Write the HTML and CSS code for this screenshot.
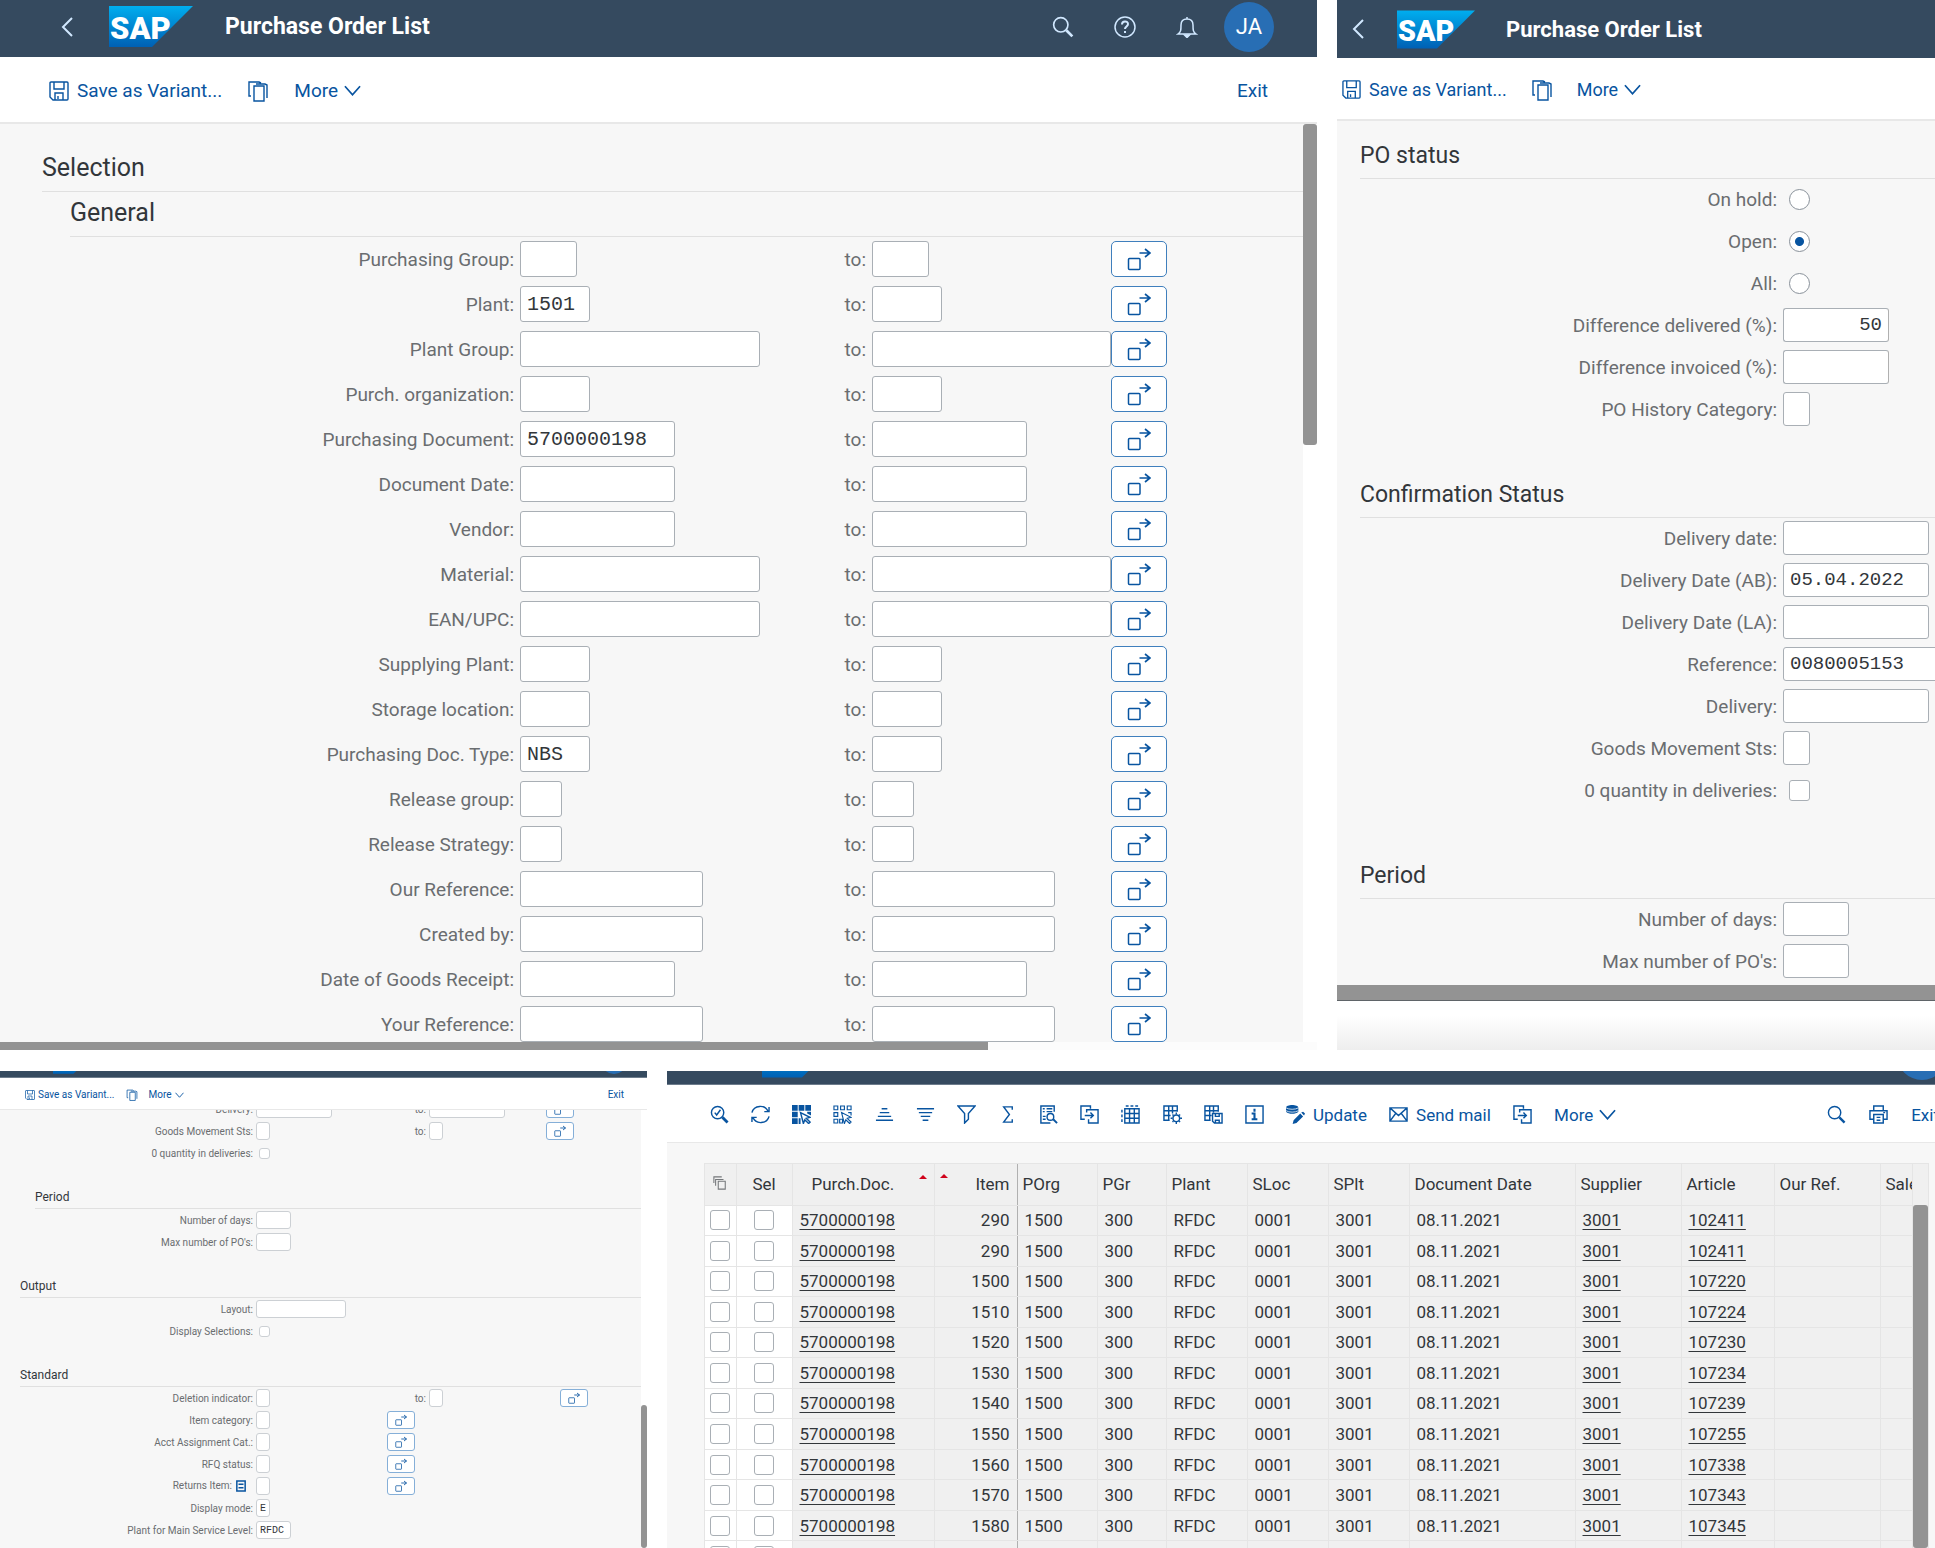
FILE: index.html
```
<!DOCTYPE html>
<html lang="en">
<head>
	<meta charset="utf-8">
	<title>Purchase Order List</title>
	<link rel="stylesheet" href="styles.css">
</head>
<body>

<!-- icon set, used by all four screens -->
<svg class="defs" aria-hidden="true">
	<defs>
		<linearGradient id="sap-blue" x1="0" y1="0" x2="0" y2="1">
			<stop offset="0" stop-color="#00aeef"/>
			<stop offset="1" stop-color="#0060b4"/>
		</linearGradient>
	</defs>
	<symbol id="sap" viewBox="0 0 84 41">
		<path d="M0 0h84L43 41H0z" fill="url(#sap-blue)" stroke="none"/>
		<text x="1" y="33" class="sap-text">SAP</text>
	</symbol>
	<symbol id="back" viewBox="0 0 12 20"><path d="M11 1L2 10l9 9" stroke-width="2"/></symbol>
	<symbol id="search" viewBox="0 0 20 20"><circle cx="8" cy="8" r="6.5"/><path d="M13 13l5.500 5.500" stroke-width="2.500"/></symbol>
	<symbol id="help" viewBox="0 0 22 22"><circle cx="11" cy="11" r="10"/><path d="M8 8.500c0-4 6-4 6-.5 0 2.500-3 2.500-3 5M11 15v2" stroke-width="2"/></symbol>
	<symbol id="bell" viewBox="0 0 20 22"><path d="M1 18c3-2 3-4 3-9 0-4 2-6 6-6s6 2 6 6c0 5 0 7 3 9zM10 1v2"/><path d="M7.500 19h5l-2.500 2.500z" fill="currentColor"/></symbol>
	<symbol id="save" viewBox="0 0 20 20"><path d="M2 1h16q1 0 1 1v16q0 1-1 1H4l-3-3V2q0-1 1-1zM5 1v7h10V1M6 19v-7h8v7M9 15v3" stroke-width="1.400"/></symbol>
	<symbol id="copy" viewBox="0 0 22 22"><path d="M4 16H2V2h10l2 1M7 6h10v15H7zM9 4h9l2 1v13" stroke-width="1.400"/></symbol>
	<symbol id="down" viewBox="0 0 18 11"><path d="M1 1l8 9 8-9" stroke-width="1.800"/></symbol>
	<symbol id="multi" viewBox="0 0 24 24"><rect x="1.500" y="11.500" width="11.500" height="11" rx="1"/><path d="M12.500 6h10.500M18 2l5 4-5 4" stroke-width="1.700"/></symbol>
	<symbol id="list" viewBox="0 0 12 14"><path d="M1 1h10v12H1zM3 5h6M3 9h6" stroke-width="1.800"/></symbol>
	<symbol id="details" viewBox="0 0 20 20"><circle cx="8" cy="8" r="6.500"/><path d="M5 8l2 2.500L11 5"/><path d="M13 13l5.500 5.500" stroke-width="3"/></symbol>
	<symbol id="refresh" viewBox="0 0 20 20"><path d="M1 8c2-8 14-9 17-1M19 2v5h-5M19 12c-2 8-14 9-17 1M1 18v-5h5"/></symbol>
	<symbol id="select-all" viewBox="0 0 20 20"><path d="M0 0h6v6H0zM7 0h6v6H7zM14 0h6v6h-6zM0 7h6v6H0zM0 14h6v6H0zM7 14h2v6H7zM16 7h4v4l-4-2z" fill="currentColor" stroke="none"/><path d="M9 8l10 5-4 1 4 4-1.500 1.500-4-4-1.500 4z"/></symbol>
	<symbol id="deselect-all" viewBox="0 0 20 20"><path d="M1 1h4v4H1zM8 1h4v4H8zM15 1h4v4h-4zM1 8h4v4H1zM1 15h4v4H1zM7 15h3v4H7zM16 8h3v3M9 8l10 5-4 1 4 4-1.500 1.500-4-4-1.500 4z" stroke-width="1.200"/></symbol>
	<symbol id="asc" viewBox="0 0 20 20"><path d="M7 4h6M5 8h10M3 12h14M1 16h18"/></symbol>
	<symbol id="desc" viewBox="0 0 20 20"><path d="M1 4h18M3 8h14M5 12h10M7 16h6"/></symbol>
	<symbol id="filter" viewBox="0 0 20 20"><path d="M1 1h18l-7 8v6l-4 4V9z"/></symbol>
	<symbol id="sum" viewBox="0 0 20 20"><path d="M15 5V2H6l6 8-6 8h9v-3"/></symbol>
	<symbol id="view" viewBox="0 0 20 20"><path d="M16 7V1H2v18h10M4 4h2M8 4h6M4 7h2M8 7h6M4 12h3M4 15h3"/><circle cx="12" cy="12.500" r="3.500"/><path d="M15 15l4 4" stroke-width="2"/></symbol>
	<symbol id="export" viewBox="0 0 20 20"><path d="M5 15H1V1h10v3M7 8V5h12v14H9v-4M5 11h9M11 8l3 3-3 3"/></symbol>
	<symbol id="grid" viewBox="0 0 20 20"><path d="M4 4h15v15H4zM4 9h15M4 14h15M9 4v15M14 4v15M5 1h3M10 1h3M15 1h3M1 5v3M1 10v3M1 15v3"/></symbol>
	<symbol id="grid-gear" viewBox="0 0 20 20"><path d="M7 16H1V1h14v6M1 6h14M1 11h7M6 1v15M10 1v8"/><circle cx="14" cy="14" r="3.500"/><path d="M14 8v2M14 18v2M8 14h2M18 14h2M10 10l1 1M17 17l1 1M10 18l1-1M17 11l1-1"/></symbol>
	<symbol id="grid-save" viewBox="0 0 20 20"><path d="M7 16H1V1h14v6M1 6h14M1 11h7M6 1v15M10 1v7M9 9h10v10H11l-2-2zM12 9v3h4V9M12 19v-3h4v3"/></symbol>
	<symbol id="info" viewBox="0 0 20 20"><path d="M1 1h18v18H1z"/><path d="M10 4v3M7 9h3v6M7 15h6" stroke-width="2.200"/></symbol>
	<symbol id="update" viewBox="0 0 20 20"><path d="M0 3c0-4 13-4 13 0v4c-3 3-10 3-13 0z" fill="currentColor" stroke="none"/><path d="M0 3c3 2 10 2 13 0M0 6c3 2 10 2 13 0" stroke="#fff" stroke-width=".8"/><path d="M7 20l1-4 7-7 3 3-7 7zM16 8l2-1 2 2-1 2z" fill="currentColor" stroke="none"/></symbol>
	<symbol id="mail" viewBox="0 0 20 18"><path d="M1 2h18v14H1zM1 2l9 8 9-8M1 16l6-8M19 16l-6-8"/></symbol>
	<symbol id="print" viewBox="0 0 20 20"><path d="M5 6V1h10v5M5 15H1V6h18v9h-4M5 10h10v9H5zM8 13h4M8 16h4M15 8h2"/></symbol>
	<symbol id="stack" viewBox="0 0 16 16"><path d="M6 6h8v9H6zM3 11V4h9M1 8V1h9" stroke-width="1.200"/></symbol>
</svg>

<main class="board">

<!-- selection screen -->
<section class="screen general">
	<header class="shell">
		<button class="icon-btn" aria-label="Back"><svg class="back"><use href="#back"/></svg></button>
		<svg class="logo" role="img" aria-label="SAP"><use href="#sap"/></svg>
		<h1>Purchase Order List</h1>
		<nav class="shell-actions">
			<button class="icon-btn" aria-label="Search"><svg class="ico"><use href="#search"/></svg></button>
			<button class="icon-btn" aria-label="Help"><svg class="ico"><use href="#help"/></svg></button>
			<button class="icon-btn" aria-label="Notifications"><svg class="ico"><use href="#bell"/></svg></button>
			<button class="avatar">JA</button>
		</nav>
	</header>
	<div class="toolbar">
		<button><svg class="ico"><use href="#save"/></svg>Save as Variant...</button>
		<button aria-label="Copy"><svg class="ico copy"><use href="#copy"/></svg></button>
		<button class="more">More<svg class="down"><use href="#down"/></svg></button>
		<button class="exit">Exit</button>
	</div>
	<div class="scroller">
		<div class="content">
			<h2>Selection</h2>
			<h2 class="sub">General</h2>
			<form class="rows">
				<div class="row"><label for="pg">Purchasing Group:</label><input id="pg" class="w3"><label for="pg2">to:</label><input id="pg2" class="w3"><button type="button" aria-label="Multiple selection"><svg><use href="#multi"/></svg></button></div>
				<div class="row"><label for="pl">Plant:</label><input id="pl" class="w4" value="1501"><label for="pl2">to:</label><input id="pl2" class="w4"><button type="button" aria-label="Multiple selection"><svg><use href="#multi"/></svg></button></div>
				<div class="row"><label for="plg">Plant Group:</label><input id="plg"><label for="plg2">to:</label><input id="plg2"><button type="button" aria-label="Multiple selection"><svg><use href="#multi"/></svg></button></div>
				<div class="row"><label for="po">Purch. organization:</label><input id="po" class="w4"><label for="po2">to:</label><input id="po2" class="w4"><button type="button" aria-label="Multiple selection"><svg><use href="#multi"/></svg></button></div>
				<div class="row"><label for="pd">Purchasing Document:</label><input id="pd" class="w10" value="5700000198"><label for="pd2">to:</label><input id="pd2" class="w10"><button type="button" aria-label="Multiple selection"><svg><use href="#multi"/></svg></button></div>
				<div class="row"><label for="dd">Document Date:</label><input id="dd" class="w10"><label for="dd2">to:</label><input id="dd2" class="w10"><button type="button" aria-label="Multiple selection"><svg><use href="#multi"/></svg></button></div>
				<div class="row"><label for="ve">Vendor:</label><input id="ve" class="w10"><label for="ve2">to:</label><input id="ve2" class="w10"><button type="button" aria-label="Multiple selection"><svg><use href="#multi"/></svg></button></div>
				<div class="row"><label for="ma">Material:</label><input id="ma"><label for="ma2">to:</label><input id="ma2"><button type="button" aria-label="Multiple selection"><svg><use href="#multi"/></svg></button></div>
				<div class="row"><label for="ean">EAN/UPC:</label><input id="ean"><label for="ean2">to:</label><input id="ean2"><button type="button" aria-label="Multiple selection"><svg><use href="#multi"/></svg></button></div>
				<div class="row"><label for="sp">Supplying Plant:</label><input id="sp" class="w4"><label for="sp2">to:</label><input id="sp2" class="w4"><button type="button" aria-label="Multiple selection"><svg><use href="#multi"/></svg></button></div>
				<div class="row"><label for="sl">Storage location:</label><input id="sl" class="w4"><label for="sl2">to:</label><input id="sl2" class="w4"><button type="button" aria-label="Multiple selection"><svg><use href="#multi"/></svg></button></div>
				<div class="row"><label for="dt">Purchasing Doc. Type:</label><input id="dt" class="w4" value="NBS"><label for="dt2">to:</label><input id="dt2" class="w4"><button type="button" aria-label="Multiple selection"><svg><use href="#multi"/></svg></button></div>
				<div class="row"><label for="rg">Release group:</label><input id="rg" class="w2"><label for="rg2">to:</label><input id="rg2" class="w2"><button type="button" aria-label="Multiple selection"><svg><use href="#multi"/></svg></button></div>
				<div class="row"><label for="rs">Release Strategy:</label><input id="rs" class="w2"><label for="rs2">to:</label><input id="rs2" class="w2"><button type="button" aria-label="Multiple selection"><svg><use href="#multi"/></svg></button></div>
				<div class="row"><label for="or">Our Reference:</label><input id="or" class="w12"><label for="or2">to:</label><input id="or2" class="w12"><button type="button" aria-label="Multiple selection"><svg><use href="#multi"/></svg></button></div>
				<div class="row"><label for="cb">Created by:</label><input id="cb" class="w12"><label for="cb2">to:</label><input id="cb2" class="w12"><button type="button" aria-label="Multiple selection"><svg><use href="#multi"/></svg></button></div>
				<div class="row"><label for="gr">Date of Goods Receipt:</label><input id="gr" class="w10"><label for="gr2">to:</label><input id="gr2" class="w10"><button type="button" aria-label="Multiple selection"><svg><use href="#multi"/></svg></button></div>
				<div class="row"><label for="yr">Your Reference:</label><input id="yr" class="w12"><label for="yr2">to:</label><input id="yr2" class="w12"><button type="button" aria-label="Multiple selection"><svg><use href="#multi"/></svg></button></div>
			</form>
		</div>
		<div class="vbar"><div class="thumb"></div></div>
	</div>
	<div class="hbar"><div class="thumb"></div></div>
</section>

<!-- status screen -->
<section class="screen status">
	<header class="shell">
		<button class="icon-btn" aria-label="Back"><svg class="back"><use href="#back"/></svg></button>
		<svg class="logo" role="img" aria-label="SAP"><use href="#sap"/></svg>
		<h1>Purchase Order List</h1>
	</header>
	<div class="toolbar">
		<button><svg class="ico"><use href="#save"/></svg>Save as Variant...</button>
		<button aria-label="Copy"><svg class="ico copy"><use href="#copy"/></svg></button>
		<button class="more">More<svg class="down"><use href="#down"/></svg></button>
	</div>
	<form class="content">
		<h2>PO status</h2>
		<div class="rows">
			<div class="row"><label for="hold">On hold:</label><input type="radio" name="st" id="hold"></div>
			<div class="row"><label for="open">Open:</label><input type="radio" name="st" id="open" checked></div>
			<div class="row"><label for="all">All:</label><input type="radio" name="st" id="all"></div>
			<div class="row"><label for="dfd">Difference delivered (%):</label><input id="dfd" class="w7 num" value="50"></div>
			<div class="row"><label for="dfi">Difference invoiced (%):</label><input id="dfi" class="w7 num"></div>
			<div class="row"><label for="poh">PO History Category:</label><input id="poh" class="w1"></div>
		</div>
		<h2>Confirmation Status</h2>
		<div class="rows">
			<div class="row"><label for="ded">Delivery date:</label><input id="ded" class="w10"></div>
			<div class="row"><label for="dab">Delivery Date (AB):</label><input id="dab" class="w10" value="05.04.2022"></div>
			<div class="row"><label for="dla">Delivery Date (LA):</label><input id="dla" class="w10"></div>
			<div class="row"><label for="ref">Reference:</label><input id="ref" value="0080005153"></div>
			<div class="row"><label for="del">Delivery:</label><input id="del" class="w10"></div>
			<div class="row"><label for="gms">Goods Movement Sts:</label><input id="gms" class="w1"></div>
			<div class="row"><label for="zq">0 quantity in deliveries:</label><input type="checkbox" id="zq"></div>
		</div>
		<h2>Period</h2>
		<div class="rows">
			<div class="row"><label for="nod">Number of days:</label><input id="nod" class="w4"></div>
			<div class="row"><label for="mpo">Max number of PO's:</label><input id="mpo" class="w4"></div>
		</div>
	</form>
	<div class="hbar"><div class="thumb"></div></div>
	<div class="foot"></div>
</section>

<!-- lower part of the selection screen -->
<section class="screen standard">
	<header class="shell cut">
		<svg class="logo" role="img" aria-label="SAP"><use href="#sap"/></svg>
		<span class="avatar"></span>
	</header>
	<div class="toolbar">
		<button><svg class="ico"><use href="#save"/></svg>Save as Variant...</button>
		<button aria-label="Copy"><svg class="ico copy"><use href="#copy"/></svg></button>
		<button class="more">More<svg class="down"><use href="#down"/></svg></button>
		<button class="exit">Exit</button>
	</div>
	<div class="scroller">
		<form class="content">
			<div class="rows">
				<div class="row"><label for="sdel">Delivery:</label><input id="sdel" class="w10"><label for="sdel2">to:</label><input id="sdel2" class="w10"><button type="button" aria-label="Multiple selection"><svg><use href="#multi"/></svg></button></div>
				<div class="row"><label for="sgm">Goods Movement Sts:</label><input id="sgm" class="w1"><label for="sgm2">to:</label><input id="sgm2" class="w1"><button type="button" aria-label="Multiple selection"><svg><use href="#multi"/></svg></button></div>
				<div class="row"><label for="szq">0 quantity in deliveries:</label><input type="checkbox" id="szq"></div>
			</div>
			<h2 class="sub">Period</h2>
			<div class="rows">
				<div class="row"><label for="snd">Number of days:</label><input id="snd" class="w4"></div>
				<div class="row"><label for="smp">Max number of PO's:</label><input id="smp" class="w4"></div>
			</div>
			<h2>Output</h2>
			<div class="rows">
				<div class="row"><label for="lay">Layout:</label><input id="lay"></div>
				<div class="row"><label for="dsel">Display Selections:</label><input type="checkbox" id="dsel"></div>
			</div>
			<h2>Standard</h2>
			<div class="rows">
				<div class="row wide"><label for="di">Deletion indicator:</label><input id="di" class="w1"><label for="di2">to:</label><input id="di2" class="w1"><button type="button" aria-label="Multiple selection"><svg><use href="#multi"/></svg></button></div>
				<div class="row single"><label for="ic">Item category:</label><input id="ic" class="w1"><button type="button" aria-label="Multiple selection"><svg><use href="#multi"/></svg></button></div>
				<div class="row single"><label for="aac">Acct Assignment Cat.:</label><input id="aac" class="w1"><button type="button" aria-label="Multiple selection"><svg><use href="#multi"/></svg></button></div>
				<div class="row single"><label for="rfq">RFQ status:</label><input id="rfq" class="w1"><button type="button" aria-label="Multiple selection"><svg><use href="#multi"/></svg></button></div>
				<div class="row single"><label for="ri">Returns Item:<svg class="list"><use href="#list"/></svg></label><input id="ri" class="w1"><button type="button" aria-label="Multiple selection"><svg><use href="#multi"/></svg></button></div>
				<div class="row"><label for="dm">Display mode:</label><input id="dm" class="w1" value="E"></div>
				<div class="row"><label for="psl">Plant for Main Service Level:</label><input id="psl" class="w4" value="RFDC"></div>
			</div>
		</form>
		<div class="vbar"><div class="thumb"></div></div>
	</div>
</section>

<!-- result list -->
<section class="screen result">
	<header class="shell cut">
		<svg class="logo" role="img" aria-label="SAP"><use href="#sap"/></svg>
		<span class="avatar"></span>
	</header>
	<div class="toolbar">
		<div class="tools">
			<button aria-label="Details"><svg class="ico"><use href="#details"/></svg></button>
			<button aria-label="Refresh"><svg class="ico"><use href="#refresh"/></svg></button>
			<button aria-label="Select all"><svg class="ico"><use href="#select-all"/></svg></button>
			<button aria-label="Deselect all"><svg class="ico"><use href="#deselect-all"/></svg></button>
			<button aria-label="Sort ascending"><svg class="ico"><use href="#asc"/></svg></button>
			<button aria-label="Sort descending"><svg class="ico"><use href="#desc"/></svg></button>
			<button aria-label="Filter"><svg class="ico"><use href="#filter"/></svg></button>
			<button aria-label="Total"><svg class="ico"><use href="#sum"/></svg></button>
			<button aria-label="Print preview"><svg class="ico"><use href="#view"/></svg></button>
			<button aria-label="Export"><svg class="ico"><use href="#export"/></svg></button>
			<button aria-label="Spreadsheet"><svg class="ico"><use href="#grid"/></svg></button>
			<button aria-label="Change layout"><svg class="ico"><use href="#grid-gear"/></svg></button>
			<button aria-label="Save layout"><svg class="ico"><use href="#grid-save"/></svg></button>
			<button aria-label="Information"><svg class="ico"><use href="#info"/></svg></button>
			<button><svg class="ico"><use href="#update"/></svg>Update</button>
			<button><svg class="ico"><use href="#mail"/></svg>Send mail</button>
			<button aria-label="Export list"><svg class="ico"><use href="#export"/></svg></button>
			<button class="more">More<svg class="down"><use href="#down"/></svg></button>
		</div>
		<div class="tools-right">
			<button aria-label="Search"><svg class="ico"><use href="#search"/></svg></button>
			<button aria-label="Print"><svg class="ico"><use href="#print"/></svg></button>
			<button>Exit</button>
		</div>
	</div>
	<div class="list-area">
		<table>
			<colgroup><col class="c-mark"><col class="c-sel"><col class="c-doc"><col class="c-item"><col class="c-porg"><col class="c-pgr"><col class="c-code"><col class="c-code"><col class="c-code"><col class="c-date"><col class="c-supp"><col class="c-art"><col class="c-supp"><col></colgroup>
			<thead>
				<tr><th class="mark"><svg class="stack"><use href="#stack"/></svg></th><th class="mark">Sel</th><th class="doc sorted">Purch.Doc.</th><th class="num sorted">Item</th><th class="fix">POrg</th><th>PGr</th><th>Plant</th><th>SLoc</th><th>SPlt</th><th>Document Date</th><th>Supplier</th><th>Article</th><th>Our Ref.</th><th>Sales</th></tr>
			</thead>
			<tbody>
				<tr><td class="mark"><input type="checkbox" aria-label="Mark row"></td><td class="mark"><input type="checkbox" aria-label="Sel"></td><td><a href="#">5700000198</a></td><td class="num">290</td><td class="fix">1500</td><td>300</td><td>RFDC</td><td>0001</td><td>3001</td><td>08.11.2021</td><td><a href="#">3001</a></td><td><a href="#">102411</a></td><td></td><td></td></tr>
				<tr><td class="mark"><input type="checkbox" aria-label="Mark row"></td><td class="mark"><input type="checkbox" aria-label="Sel"></td><td><a href="#">5700000198</a></td><td class="num">290</td><td class="fix">1500</td><td>300</td><td>RFDC</td><td>0001</td><td>3001</td><td>08.11.2021</td><td><a href="#">3001</a></td><td><a href="#">102411</a></td><td></td><td></td></tr>
				<tr><td class="mark"><input type="checkbox" aria-label="Mark row"></td><td class="mark"><input type="checkbox" aria-label="Sel"></td><td><a href="#">5700000198</a></td><td class="num">1500</td><td class="fix">1500</td><td>300</td><td>RFDC</td><td>0001</td><td>3001</td><td>08.11.2021</td><td><a href="#">3001</a></td><td><a href="#">107220</a></td><td></td><td></td></tr>
				<tr><td class="mark"><input type="checkbox" aria-label="Mark row"></td><td class="mark"><input type="checkbox" aria-label="Sel"></td><td><a href="#">5700000198</a></td><td class="num">1510</td><td class="fix">1500</td><td>300</td><td>RFDC</td><td>0001</td><td>3001</td><td>08.11.2021</td><td><a href="#">3001</a></td><td><a href="#">107224</a></td><td></td><td></td></tr>
				<tr><td class="mark"><input type="checkbox" aria-label="Mark row"></td><td class="mark"><input type="checkbox" aria-label="Sel"></td><td><a href="#">5700000198</a></td><td class="num">1520</td><td class="fix">1500</td><td>300</td><td>RFDC</td><td>0001</td><td>3001</td><td>08.11.2021</td><td><a href="#">3001</a></td><td><a href="#">107230</a></td><td></td><td></td></tr>
				<tr><td class="mark"><input type="checkbox" aria-label="Mark row"></td><td class="mark"><input type="checkbox" aria-label="Sel"></td><td><a href="#">5700000198</a></td><td class="num">1530</td><td class="fix">1500</td><td>300</td><td>RFDC</td><td>0001</td><td>3001</td><td>08.11.2021</td><td><a href="#">3001</a></td><td><a href="#">107234</a></td><td></td><td></td></tr>
				<tr><td class="mark"><input type="checkbox" aria-label="Mark row"></td><td class="mark"><input type="checkbox" aria-label="Sel"></td><td><a href="#">5700000198</a></td><td class="num">1540</td><td class="fix">1500</td><td>300</td><td>RFDC</td><td>0001</td><td>3001</td><td>08.11.2021</td><td><a href="#">3001</a></td><td><a href="#">107239</a></td><td></td><td></td></tr>
				<tr><td class="mark"><input type="checkbox" aria-label="Mark row"></td><td class="mark"><input type="checkbox" aria-label="Sel"></td><td><a href="#">5700000198</a></td><td class="num">1550</td><td class="fix">1500</td><td>300</td><td>RFDC</td><td>0001</td><td>3001</td><td>08.11.2021</td><td><a href="#">3001</a></td><td><a href="#">107255</a></td><td></td><td></td></tr>
				<tr><td class="mark"><input type="checkbox" aria-label="Mark row"></td><td class="mark"><input type="checkbox" aria-label="Sel"></td><td><a href="#">5700000198</a></td><td class="num">1560</td><td class="fix">1500</td><td>300</td><td>RFDC</td><td>0001</td><td>3001</td><td>08.11.2021</td><td><a href="#">3001</a></td><td><a href="#">107338</a></td><td></td><td></td></tr>
				<tr><td class="mark"><input type="checkbox" aria-label="Mark row"></td><td class="mark"><input type="checkbox" aria-label="Sel"></td><td><a href="#">5700000198</a></td><td class="num">1570</td><td class="fix">1500</td><td>300</td><td>RFDC</td><td>0001</td><td>3001</td><td>08.11.2021</td><td><a href="#">3001</a></td><td><a href="#">107343</a></td><td></td><td></td></tr>
				<tr><td class="mark"><input type="checkbox" aria-label="Mark row"></td><td class="mark"><input type="checkbox" aria-label="Sel"></td><td><a href="#">5700000198</a></td><td class="num">1580</td><td class="fix">1500</td><td>300</td><td>RFDC</td><td>0001</td><td>3001</td><td>08.11.2021</td><td><a href="#">3001</a></td><td><a href="#">107345</a></td><td></td><td></td></tr>
				<tr><td class="mark"><input type="checkbox" aria-label="Mark row"></td><td class="mark"><input type="checkbox" aria-label="Sel"></td><td></td><td class="num"></td><td class="fix"></td><td></td><td></td><td></td><td></td><td></td><td></td><td></td><td></td><td></td></tr>
			</tbody>
		</table>
		<div class="vbar"><div class="thumb"></div></div>
	</div>
</section>

</main>
</body>
</html>
```
FILE: styles.css
```
*
{
	box-sizing: border-box;
}

body
{
	margin: 0;
	background: #fff;
	color: #32363a;
	font-family: Roboto, "Liberation Sans", sans-serif;
}

.defs
{
	position: absolute;
	width: 0;
	height: 0;
}

svg
{
	fill: none;
	stroke: currentColor;
	stroke-width: 1.5px;
	flex: none;
}

.sap-text
{
	font: 900 31px Roboto, sans-serif;
	fill: #fff;
	stroke: none;
}

button
{
	font: inherit;
	color: inherit;
	background: none;
	border: 0;
	padding: 0;
	cursor: pointer;
}

/* two rows of screens, each row split in its own proportion */
.board
{
	display: grid;
	grid-template-columns: 647fr 20px 650fr 20px 598fr;
	grid-template-rows: auto minmax(0, 1fr);
	row-gap: 21px;
	height: 100vh;
	overflow: hidden;
}

.screen
{
	display: flex;
	flex-direction: column;
	min-width: 0;
	min-height: 0;
	overflow: hidden;
	background: #f7f7f7;
	font-size: var(--text);
}

.general
{
	grid-column: 1 / 4;
	--text: 19px;
	--mono: 20px;
	--head: 25px;
	--head-line: 28px;
	--box: 36px;
	--gap: 9px;
	--ico: 20px;
	--label: 520px;
	--field: 240px;
	--tolabel: 112px;
	--tofield: 239px;
	--button: 56px;
}

.status
{
	grid-column: 5;
	--text: 19px;
	--mono: 19px;
	--head: 23px;
	--head-line: 28px;
	--box: 34px;
	--gap: 8px;
	--ico: 19px;
	--label: 446px;
	--field: 240px;
}

.standard
{
	grid-column: 1;
	--text: 10px;
	--mono: 10px;
	--head: 12px;
	--head-line: 16px;
	--box: 18px;
	--gap: 4px;
	--ico: 10px;
	--label: 256px;
	--field: 90px;
	--tolabel: 83px;
	--tofield: 117px;
	--button: 28px;
}

.result
{
	grid-column: 3 / 6;
	--text: 17px;
	--ico: 19px;
}

/* shell bar */
.shell
{
	display: flex;
	align-items: center;
	flex: none;
	height: 57px;
	padding: 0 37px 4px 61px;
	background: #354a5f;
	color: #d1e8ff;
}

.status .shell
{
	height: 58px;
	padding: 0 0 0 15px;
}

.back
{
	display: block;
	width: 12px;
	height: 20px;
}

.logo
{
	width: 84px;
	height: 41px;
	margin: 0 32px 0 36px;
}

.status .logo
{
	width: 78px;
	height: 39px;
	margin: 0 31px 0 33px;
}

.shell h1
{
	margin: 0;
	color: #fff;
	font-size: 23px;
	font-weight: 700;
	white-space: nowrap;
}

.status .shell h1
{
	font-size: 22px;
}

.shell-actions
{
	display: flex;
	align-items: center;
	margin-left: auto;
}

.shell-actions .icon-btn
{
	display: flex;
	justify-content: center;
	width: 62px;
}

.avatar
{
	width: 50px;
	height: 50px;
	margin: 0 6px;
	border-radius: 50%;
	background: #286eb4;
	color: #fff;
	font-size: 22px;
}

/* shell bars that are scrolled away but for their lower edge */
.shell.cut
{
	align-items: flex-end;
	justify-content: space-between;
	height: 7px;
	padding: 0 20px 3px 17px;
	overflow: hidden;
	border-bottom: 1px solid #6d7c8c;
}

.cut .logo
{
	width: 40px;
	height: 20px;
}

.cut .avatar
{
	width: 26px;
	height: 26px;
	margin: 0;
}

.result .shell.cut
{
	height: 14px;
	padding: 0 0 4px 59px;
}

.result .logo
{
	width: 78px;
	height: 39px;
	margin-bottom: 2px;
}

.result .cut .avatar
{
	width: 50px;
	height: 50px;
	margin-right: -12px;
}

/* toolbar */
.toolbar
{
	display: flex;
	align-items: center;
	flex: none;
	gap: 25px;
	height: 67px;
	padding: 2px 49px 0;
	background: #fff;
	border-bottom: 2px solid #e8e8e8;
	color: #0854a0;
	white-space: nowrap;
}

.toolbar button
{
	display: flex;
	align-items: center;
	gap: 8px;
}

.toolbar .more
{
	gap: 6px;
}

.ico
{
	width: var(--ico);
	height: var(--ico);
}

.ico.copy,
.shell .ico
{
	width: 22px;
	height: 22px;
}

.down
{
	width: 17px;
	height: 11px;
}

.exit
{
	margin-left: auto;
}

.status .toolbar
{
	height: 63px;
	padding: 2px 5px 0;
	gap: 24px;
	font-size: 18px;
}

.standard .toolbar
{
	height: 32px;
	padding: 2px 23px 0 25px;
	gap: 11px;
	border-bottom-width: 1px;
}

.standard .toolbar button
{
	gap: 3px;
}

.standard .ico.copy
{
	width: 12px;
	height: 12px;
}

.standard .down
{
	width: 9px;
	height: 6px;
}

.result .toolbar
{
	justify-content: space-between;
	height: 58px;
	padding: 2px 0 0 43px;
	border-bottom-width: 1px;
}

.tools
{
	display: flex;
	justify-content: space-between;
	flex: 0 0 74%;
}

.tools-right
{
	display: flex;
	gap: 23px;
	margin-right: -4px;
}

/* forms */
.scroller
{
	display: flex;
	flex: 1;
	min-height: 0;
}

.content
{
	flex: 1;
	min-width: 0;
	overflow: hidden;
}

h2
{
	margin: 0 0 3px 23px;
	padding-bottom: 8px;
	border-bottom: 1px solid #e0e0e0;
	font-size: var(--head);
	line-height: var(--head-line);
	font-weight: 400;
}

.general h2
{
	margin: 30px 0 7px 42px;
	padding-bottom: 9px;
}

.general h2.sub
{
	margin: 0 0 4px 70px;
	padding-bottom: 9px;
}

.status .content
{
	flex: none;
	padding: 21px 0 7px;
}

.status .rows + h2
{
	margin-top: 55px;
}

.standard h2
{
	margin: 27px 0 2px 20px;
	padding-bottom: 3px;
}

.standard h2.sub
{
	margin-left: 35px;
}

/* scrolled so that the first row is cut by the toolbar */
.standard .rows:first-child
{
	margin-top: -10px;
}

.rows
{
	display: grid;
	grid-auto-rows: var(--box);
	row-gap: var(--gap);
}

.row
{
	display: grid;
	grid-template-columns: var(--label) var(--field) var(--tolabel, 0) var(--tofield, 0) var(--button, 0);
	align-items: center;
}

label
{
	padding-right: 6px;
	color: #6a6d70;
	text-align: right;
	white-space: nowrap;
}

.standard label
{
	padding-right: 3px;
}

.list
{
	width: 10px;
	height: 12px;
	margin: 0 7px 0 4px;
	color: #0854a0;
	vertical-align: middle;
}

input
{
	width: 100%;
	height: var(--box);
	margin: 0;
	padding: 0 6px;
	background: #fff;
	border: 1px solid #a9afb5;
	border-radius: 3px;
	color: #32363a;
	font-family: "Liberation Mono", monospace;
	font-size: var(--mono);
}

.w1 { width: 27px; }
.w2 { width: 42px; }
.w3 { width: 57px; }
.w4 { width: 70px; }
.w7 { width: 106px; }
.w10 { width: 155px; }
.w12 { width: 183px; }

.status .w4 { width: 66px; }
.status .w10 { width: 146px; }

.standard input
{
	padding: 0 3px;
	border-color: #ccd0d4;
}

.standard .w1 { width: 14px; }
.standard .w4 { width: 35px; }
.standard .w10 { width: 76px; }

input.num
{
	text-align: right;
}

input[type="radio"],
input[type="checkbox"]
{
	appearance: none;
	width: 21px;
	height: 21px;
	margin-left: 6px;
	padding: 0;
}

input[type="radio"]
{
	border-radius: 50%;
	border-color: #89919a;
}

input[type="radio"]:checked
{
	background: radial-gradient(circle, #0854a0 4px, #fff 5px);
}

.standard input[type="checkbox"]
{
	width: 11px;
	height: 11px;
	margin-left: 3px;
}

.row button
{
	display: flex;
	align-items: center;
	justify-content: center;
	height: var(--box);
	background: #fff;
	border: 1px solid #3f7fbd;
	border-radius: 5px;
	color: #0854a0;
}

.row button svg
{
	width: 24px;
	height: 24px;
}

.standard .row button
{
	width: 28px;
	border-color: #85afd8;
	border-radius: 3px;
}

.standard .row button svg
{
	width: 12px;
	height: 12px;
}

.wide button
{
	margin-left: 14px;
}

.single button
{
	margin-left: 41px;
}

/* scrollbars */
.vbar
{
	flex: none;
	width: 14px;
	background: #fff;
}

.thumb
{
	background: #939393;
}

.vbar .thumb
{
	height: 35%;
	border-radius: 3px;
}

.hbar
{
	height: 8px;
	background: #fcfcfc;
}

.hbar .thumb
{
	width: 75%;
	height: 100%;
}

.status .hbar
{
	height: 16px;
	border-bottom: 1px solid #5f6468;
}

.status .hbar .thumb
{
	width: 100%;
}

.foot
{
	flex: 1;
	background: linear-gradient(#fff 30%, #eee);
}

.standard .vbar
{
	width: 6px;
	padding-top: 295px;
}

.standard .vbar .thumb
{
	height: 100%;
}

/* result list */
.list-area
{
	display: flex;
	flex: 1;
	min-height: 0;
	margin: 20px 6px 0 37px;
	overflow: hidden;
	border: 1px solid #e5e5e5;
	border-bottom: 0;
}

table
{
	flex: 1;
	width: 100%;
	min-width: 0;
	height: 408px;
	table-layout: fixed;
	border-collapse: collapse;
	background: #f0f0f0;
	font-size: 17px;
}

.c-mark { width: 31px; }
.c-sel { width: 56px; }
.c-doc { width: 142px; }
.c-item { width: 83px; }
.c-porg { width: 80px; }
.c-pgr { width: 69px; }
.c-code { width: 81px; }
.c-date { width: 166px; }
.c-supp { width: 106px; }
.c-art { width: 93px; }

th, td
{
	height: 30px;
	padding: 0 7px;
	overflow: hidden;
	border-right: 1px solid #e5e5e5;
	border-bottom: 1px solid #e5e5e5;
	text-align: left;
	white-space: nowrap;
}

th
{
	height: 41px;
	padding: 0 0 0 5px;
	font-weight: 400;
}

th.doc
{
	padding-left: 19px;
}

.num
{
	border-right-color: #b0b0b0;
	text-align: right;
}

th.num
{
	padding-right: 7px;
}

/* red sort marks, towards the border both key columns share */
.sorted::after,
.num.sorted::before
{
	content: "";
	display: inline-block;
	margin: 0 0 11px 25px;
	border: 4px solid transparent;
	border-top: 0;
	border-bottom-color: #d0021b;
}

.num.sorted::after
{
	content: none;
}

.num.sorted::before
{
	float: left;
	margin: 0;
}

.mark
{
	padding: 0;
	text-align: center;
}

td.mark
{
	background: #fff;
}

.mark input
{
	display: block;
	width: 20px;
	height: 20px;
	margin: 0 auto;
}

.stack
{
	width: 14px;
	height: 14px;
	color: #74777a;
}

td a
{
	color: inherit;
	text-underline-offset: 3px;
}

.result .vbar
{
	width: 15px;
	padding-top: 41px;
	background: #f0f0f0;
}

.result .vbar .thumb
{
	height: 100%;
}
```
